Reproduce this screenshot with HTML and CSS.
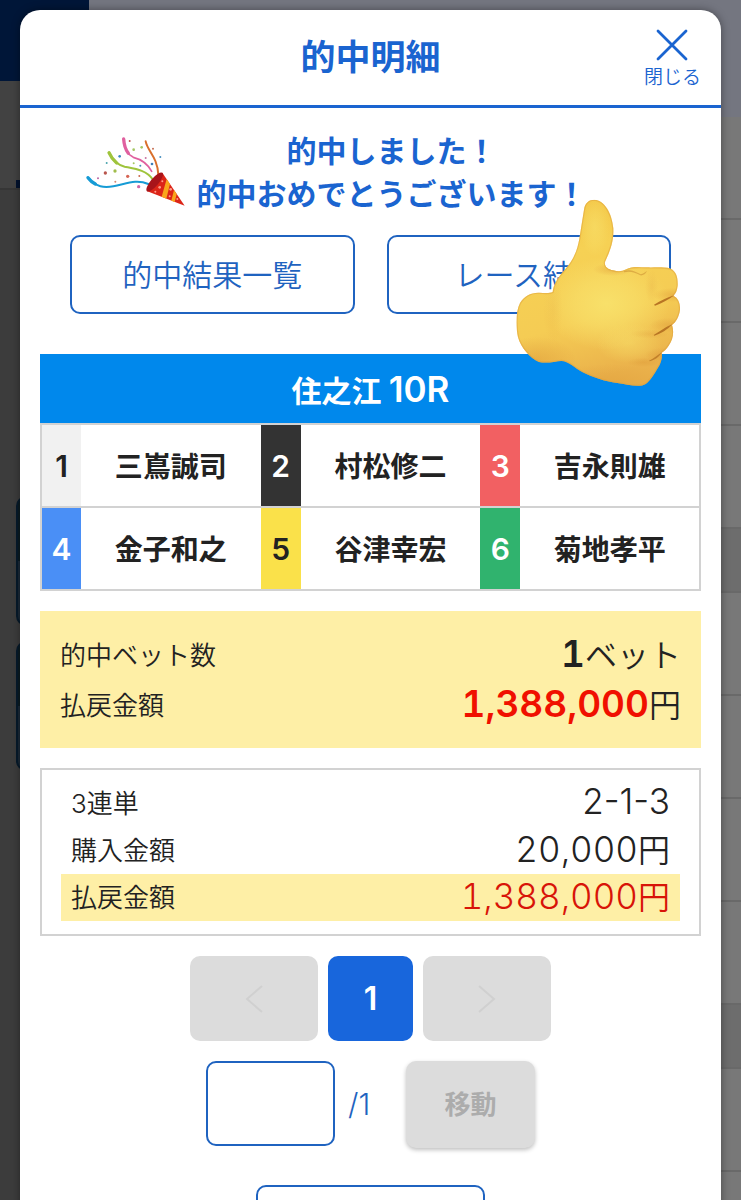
FILE: index.html
```
<!doctype html>
<html lang="ja">
<head>
  <meta charset="UTF-8">
  <meta name="viewport" content="width=device-width, initial-scale=1">
  <title>的中明細</title>
  <link rel="stylesheet" href="styles.css">
</head>

<body>

  <!-- page behind the dialog -->
  <div class="page" aria-hidden="true">
    <div class="page-left">
      <div class="page-logo"></div>
      <div class="page-tab"></div>
      <div class="page-card"></div>
      <div class="page-card"></div>
    </div>
    <div class="page-right">
      <div class="page-bar"></div>
      <div class="page-row"></div>
      <div class="page-row"></div>
      <div class="page-row"></div>
      <div class="page-row"></div>
      <div class="page-row short"></div>
      <div class="page-row"></div>
      <div class="page-row"></div>
      <div class="page-row"></div>
      <div class="page-row"></div>
      <div class="page-row short"></div>
      <div class="page-row"></div>
      <div class="page-row"></div>
    </div>
  </div>

  <div class="overlay">
    <main class="modal">
      <header class="modal-header">
        <h1>的中明細</h1>
        <button class="close" type="button">
          <svg width="32" height="32" viewBox="0 0 32 32" fill="none" stroke="currentColor" stroke-width="2.8" stroke-linecap="round">
            <path d="M2 2L30 30M30 2L2 30"/>
          </svg>
          <span>閉じる</span>
        </button>
      </header>

      <div class="modal-body">
        <section class="congrats">
          <svg class="cracker" width="100" height="72" viewBox="27 30 300 216" fill="none" stroke-linecap="round">
            <path d="M36 155C60 184 85 186 112 181C150 174 180 158 217 174" stroke="#169bd5" stroke-width="6"/>
            <path d="M36 155C42 163 50 170 58 174" stroke="#169bd5" stroke-width="10"/>
            <path d="M99 80C108 100 122 116 146 122C176 128 212 132 230 160" stroke="#9fc43c" stroke-width="6"/>
            <path d="M99 80C105 94 112 103 122 111" stroke="#9fc43c" stroke-width="10"/>
            <path d="M143 39C144 62 150 84 172 94C192 99 212 108 227 136" stroke="#e0609f" stroke-width="5"/>
            <path d="M143 39C144 56 148 70 157 82" stroke="#e0609f" stroke-width="10"/>
            <path d="M209 46C215 76 244 92 247 146" stroke="#d9702c" stroke-width="6"/>
            <g stroke="none">
              <circle cx="161" cy="45" r="3" fill="#c0504d"/>
              <circle cx="173" cy="71" r="4" fill="#a5c663"/>
              <circle cx="197" cy="64" r="4" fill="#a5c663"/>
              <circle cx="231" cy="68" r="3" fill="#c66f52"/>
              <circle cx="253" cy="93" r="3" fill="#4a8fbf"/>
              <circle cx="131" cy="91" r="4" fill="#3988c1"/>
              <circle cx="92" cy="111" r="3" fill="#48a4ad"/>
              <circle cx="173" cy="112" r="3" fill="#a5c663"/>
              <circle cx="193" cy="119" r="3" fill="#4a8fbf"/>
              <circle cx="209" cy="96" r="3" fill="#c875a3"/>
              <circle cx="228" cy="114" r="4" fill="#3f7fb7"/>
              <circle cx="88" cy="141" r="5" fill="#b9564d"/>
              <circle cx="117" cy="135" r="5" fill="#a1bd4c"/>
              <circle cx="155" cy="151" r="5" fill="#d66555"/>
              <circle cx="190" cy="150" r="3" fill="#ca6a4d"/>
              <circle cx="66" cy="157" r="3" fill="#b966a4"/>
              <circle cx="118" cy="167" r="3" fill="#d68874"/>
              <circle cx="188" cy="182" r="5" fill="#cf66a8"/>
              <path d="M259 140L326 239L212 195Z" fill="#dc2518"/>
              <ellipse cx="236" cy="168" rx="36" ry="12" transform="rotate(-50 236 168)" fill="#a8141a"/>
              <path d="M272 159L282 174L271 218L257 212Z" fill="#f9a61c"/>
              <path d="M294 192L302 204L296 228L286 224Z" fill="#f9a61c"/>
              <g fill="#ff9d8b">
                <circle cx="259" cy="166" r="3"/>
                <circle cx="251" cy="184" r="4"/>
                <circle cx="238" cy="197" r="3"/>
                <circle cx="284" cy="190" r="4"/>
                <circle cx="281" cy="211" r="3"/>
                <circle cx="304" cy="219" r="3"/>
              </g>
            </g>
          </svg>
          <p>的中しました！<br>的中おめでとうございます！</p>
        </section>

        <div class="links">
          <button class="btn-outline" type="button">的中結果一覧</button>
          <button class="btn-outline" type="button">レース結果</button>
        </div>

        <table class="race">
          <caption>住之江 <span>10R</span></caption>
          <tbody>
            <tr>
              <th class="boat boat1">1</th><td>三嶌誠司</td>
              <th class="boat boat2">2</th><td>村松修二</td>
              <th class="boat boat3">3</th><td>吉永則雄</td>
            </tr>
            <tr>
              <th class="boat boat4">4</th><td>金子和之</td>
              <th class="boat boat5">5</th><td>谷津幸宏</td>
              <th class="boat boat6">6</th><td>菊地孝平</td>
            </tr>
          </tbody>
        </table>

        <dl class="total">
          <div class="line">
            <dt>的中ベット数</dt>
            <dd><b>1</b>ベット</dd>
          </div>
          <div class="line">
            <dt>払戻金額</dt>
            <dd><b class="red">1,388,000</b>円</dd>
          </div>
        </dl>

        <dl class="detail">
          <div class="line">
            <dt>3連単</dt>
            <dd><span class="num">2-1-3</span></dd>
          </div>
          <div class="line">
            <dt>購入金額</dt>
            <dd><span class="num yen">20,000</span>円</dd>
          </div>
          <div class="line payout">
            <dt>払戻金額</dt>
            <dd><span class="num yen">1,388,000</span>円</dd>
          </div>
        </dl>

        <nav class="pager">
          <button class="page-btn" type="button" aria-label="前へ" disabled>
            <svg width="18" height="28" viewBox="0 0 18 28" fill="none" stroke="currentColor" stroke-width="2"><path d="M17 1L2 14L17 27"/></svg>
          </button>
          <button class="page-btn current" type="button">1</button>
          <button class="page-btn" type="button" aria-label="次へ" disabled>
            <svg width="18" height="28" viewBox="0 0 18 28" fill="none" stroke="currentColor" stroke-width="2"><path d="M1 1L16 14L1 27"/></svg>
          </button>
        </nav>

        <form class="jump">
          <input id="pageNo" type="text" inputmode="numeric">
          <label for="pageNo">/1</label>
          <button type="submit" disabled>移動</button>
        </form>

        <button class="btn-outline bottom" type="button" aria-label="閉じる"></button>
      </div>

      <svg class="thumb" width="165" height="188" viewBox="49 57 495 564">
        <defs>
          <linearGradient id="skin" x1="0" y1="0" x2="0.25" y2="1">
            <stop offset="0" stop-color="#f2c242"/>
            <stop offset="0.35" stop-color="#f6d154"/>
            <stop offset="0.7" stop-color="#f5cc54"/>
            <stop offset="1" stop-color="#eab14b"/>
          </linearGradient>
          <radialGradient id="palm">
            <stop offset="0" stop-color="#f8e06a"/>
            <stop offset="0.5" stop-color="#f8e06a" stop-opacity="0.6"/>
            <stop offset="1" stop-color="#f8e06a" stop-opacity="0"/>
          </radialGradient>
          <radialGradient id="shade">
            <stop offset="0" stop-color="#df9e3b" stop-opacity="0.5"/>
            <stop offset="1" stop-color="#df9e3b" stop-opacity="0"/>
          </radialGradient>
          <clipPath id="hand">
            <path id="outline" d="M253 89C256 68 268 59 284 59C314 61 337 99 341 145C343 188 328 219 316 246C314 260 324 267 340 271C355 275 367 275 380 268C394 259 414 260 440 262C466 263 492 260 513 266C530 274 535 293 534 317C532 332 528 341 521 347C536 354 542 370 541 389C538 411 529 426 517 435C524 456 520 480 507 497C501 507 493 513 486 518C489 531 484 550 475 563C463 583 452 602 438 612C420 624 381 613 353 609C315 605 278 591 249 577C224 564 207 543 185 543C167 544 142 551 118 546C91 535 64 503 55 472C48 439 48 394 61 369C73 349 93 337 119 338C137 340 151 340 159 336C161 315 174 293 194 271C221 241 233 211 239 176Z"/>
          </clipPath>
        </defs>
        <g clip-path="url(#hand)">
          <rect x="40" y="50" width="510" height="580" fill="url(#skin)"/>
          <ellipse cx="320" cy="370" rx="190" ry="140" fill="url(#palm)"/>
          <ellipse cx="390" cy="490" rx="100" ry="60" fill="url(#palm)" opacity="0.5"/>
          <ellipse cx="285" cy="140" rx="44" ry="90" fill="url(#palm)" opacity="0.6"/>
          <ellipse cx="110" cy="540" rx="120" ry="70" fill="url(#shade)"/>
          <ellipse cx="330" cy="612" rx="200" ry="60" fill="url(#shade)"/>
          <ellipse cx="340" cy="268" rx="60" ry="20" fill="url(#shade)"/>
          <ellipse cx="160" cy="390" rx="30" ry="100" fill="url(#shade)" opacity="0.3"/>
          <ellipse cx="456" cy="320" rx="20" ry="50" fill="url(#shade)" opacity="0.4"/>
          <ellipse cx="450" cy="462" rx="60" ry="14" fill="url(#shade)" opacity="0.6"/>
          <ellipse cx="432" cy="547" rx="50" ry="14" fill="url(#shade)"/>
          <ellipse cx="520" cy="345" rx="60" ry="22" fill="url(#shade)"/>
          <ellipse cx="510" cy="435" rx="60" ry="22" fill="url(#shade)"/>
          <ellipse cx="485" cy="525" rx="50" ry="22" fill="url(#shade)"/>
          <use href="#outline" fill="none" stroke="#dfa23c" stroke-width="7" stroke-opacity="0.5"/>
        </g>
        <g fill="#b87524">
          <path d="M463 374C483 363 503 351 524 346C506 359 486 371 466 377Z"/>
          <path d="M462 465C482 454 500 439 518 433C504 448 484 462 464 467Z"/>
          <path d="M448 542C463 536 475 524 487 517C478 531 464 541 450 544Z" fill-opacity="0.8"/>
          <path d="M373 274C391 267 405 273 423 283C431 281 438 276 442 273C437 283 430 287 422 286C405 277 391 273 373 277Z" fill-opacity="0.4"/>
        </g>
      </svg>
    </main>
  </div>

</body>
</html>
```
FILE: styles.css
```
* {
  box-sizing: border-box;
}
html, body {
  height: 100%;
}
body {
  margin: 0;
  color: #222;
  background: #3c3c3c;
  font-family: Inter, "Noto Sans CJK JP", sans-serif;
  font-weight: 350;
}
h1, p, dl, dd {
  margin: 0;
}
button, input {
  margin: 0;
  padding: 0;
  font: inherit;
  color: inherit;
}
svg {
  display: block;
  flex: none;
}

/* dimmed page */
.page {
  position: fixed;
  top: 0; left: 0; right: 0; bottom: 0;
  display: flex;
  justify-content: space-between;
  overflow: hidden;
  background: linear-gradient(#747680 116px, #3c3c3c 116px);
}
.page-left {
  width: 89px;
  background: #3c3c3c;
}
.page-logo {
  height: 81px;
  background: #001638;
}
.page-tab {
  height: 109px;
  margin-bottom: 306px;
  border-bottom: 2px solid #363636;
  background: linear-gradient(#02122e, #02122e) 16px 100% / 73px 8px no-repeat #424242;
}
.page-card {
  height: 130px;
  margin: 0 0 15px 16px;
  border: 2px solid #061a2b;
  border-radius: 10px;
  background: linear-gradient(#0b1c22 50%, #1b2a38 50%);
}
.page-right {
  width: 40px;
  background: #787878;
}
.page-bar {
  height: 117px;
  background: #747680;
}
.page-row {
  height: 103px;
  border-bottom: 2px solid #696969;
}
.page-row.short {
  height: 64px;
  background: #6d6d6d;
}

/* dialog */
.overlay {
  position: fixed;
  top: 0; left: 0; right: 0; bottom: 0;
  padding: 10px 20px 0;
  overflow: hidden;
}
.modal {
  position: relative;
  min-height: 100%;
  border-radius: 20px 20px 0 0;
  background: #fff;
  box-shadow: 0 0 8px rgba(0, 0, 0, .4);
}
.modal-header {
  display: grid;
  grid-template-columns: 1fr auto 1fr;
  align-items: center;
  height: 98px;
  padding: 0 20px;
  border-bottom: 3px solid #1a64d0;
  color: #1a64d0;
}
.modal-header h1 {
  grid-column: 2;
  padding-bottom: 2px;
  font-size: 35px;
  line-height: 50px;
  font-weight: 700;
}
.close {
  display: flex;
  flex-direction: column;
  align-items: center;
  justify-self: end;
  gap: 4px;
  padding-top: 4px;
  border: 0;
  background: none;
  font-size: 19px;
  line-height: 26px;
}
.modal-body {
  padding: 20px 20px 40px;
}
.congrats {
  display: flex;
  justify-content: center;
  align-items: flex-start;
  gap: 12px;
  padding: 2px 70px 0 0;
  color: #1a64d0;
  font-size: 30px;
  line-height: 43px;
  font-weight: 700;
  text-align: center;
  white-space: nowrap;
}
.cracker {
  margin-top: 6px;
}
.links {
  display: grid;
  grid-template-columns: 1fr 1fr;
  gap: 32px;
  margin: 19px 30px 40px;
}
.btn-outline {
  height: 79px;
  padding-bottom: 4px;
  border: 2px solid #1f63c0;
  border-radius: 10px;
  background: #fff;
  color: #1f63c0;
  font-size: 30px;
}
.race {
  width: 100%;
  table-layout: fixed;
  border-collapse: collapse;
  font-size: 28px;
  font-weight: 700;
}
.race caption {
  height: 69px;
  line-height: 70px;
  background: #0088ec;
  color: #fff;
  font-size: 30px;
}
.race caption span {
  font-size: 35px;
  font-weight: 600;
}
.race tr {
  height: 83px;
  border: 2px solid #d2d2d2;
}
.race th, .race td {
  padding: 0 0 2px;
  text-align: center;
}
.race .boat {
  width: 40px;
  padding: 0;
  color: #fff;
  font-size: 30px;
  font-weight: 600;
}
.race .boat1 {
  background: #f1f1f1;
  color: #222;
}
.race .boat2 {
  background: #333;
}
.race .boat3 {
  background: #f26062;
}
.race .boat4 {
  background: #4a8ff6;
}
.race .boat5 {
  background: #fae14a;
  color: #222;
}
.race .boat6 {
  background: #30b36e;
}
.line {
  display: flex;
  justify-content: space-between;
  align-items: center;
  font-size: 26px;
}
.line dd {
  font-size: 32px;
}
.line b {
  font-size: 37px;
  font-weight: 600;
  font-variant-numeric: tabular-nums;
}
.line .num {
  font-size: 35px;
}
.line .yen {
  font-variant-numeric: tabular-nums;
}
.red {
  color: #f01000;
}
.total {
  margin: 20px 0;
  padding: 18px 20px 19px;
  background: #feefa6;
}
.total .line {
  height: 50px;
  padding-bottom: 2px;
}
.detail {
  padding: 10px 19px 13px;
  border: 2px solid #d2d2d2;
}
.detail .line {
  height: 47px;
  padding: 0 10px 5px;
}
.payout {
  background: #feefa6;
}
.payout dd {
  color: #d81408;
}

/* paging */
.pager {
  display: flex;
  justify-content: center;
  gap: 10px;
  margin: 20px 0;
}
.page-btn {
  display: flex;
  justify-content: center;
  align-items: center;
  width: 128px;
  height: 85px;
  border: 0;
  border-radius: 10px;
  background: #dcdcdc;
  color: #d0d0d0;
}
.page-btn.current {
  width: 85px;
  background: #1866dc;
  color: #fff;
  font-size: 32px;
  font-weight: 600;
}
.jump {
  display: flex;
  justify-content: center;
  align-items: flex-start;
  color: #1f63c0;
  font-size: 30px;
}
.jump input {
  width: 129px;
  height: 85px;
  border: 2px solid #1f63c0;
  border-radius: 10px;
  background: #fff;
  text-align: center;
}
.jump label {
  width: 71px;
  padding-left: 13px;
  line-height: 86px;
}
.jump button {
  width: 129px;
  height: 87px;
  padding-bottom: 5px;
  border: 0;
  border-radius: 10px;
  background: #dcdcdc;
  box-shadow: 0 2px 4px rgba(0, 0, 0, .25);
  color: #acacac;
  font-size: 26px;
  font-weight: 700;
}
.bottom {
  display: block;
  width: 229px;
  margin: 37px auto 0;
}

.thumb {
  position: absolute;
  top: 189px;
  right: 40px;
}
```
